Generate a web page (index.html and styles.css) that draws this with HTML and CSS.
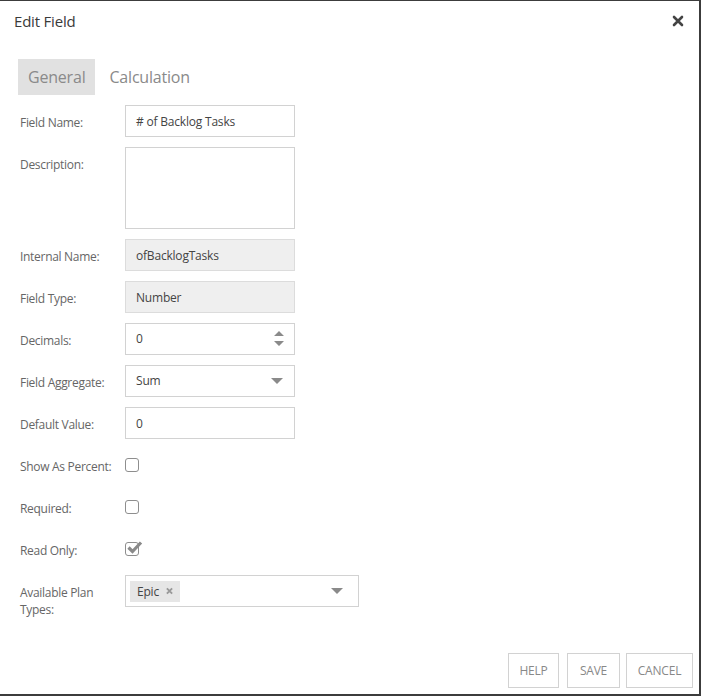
FILE: index.html
```html
<!DOCTYPE html>
<html>
<head>
<meta charset="utf-8">
<link rel="stylesheet" href="styles.css">
</head>
<body>
<div class="dialog">
  <div class="header">
    <div class="title">Edit Field</div>
    <button class="close" aria-label="Close">
      <svg width="12" height="12" viewBox="0 0 12 12"><path d="M2 2 L10 10 M10 2 L2 10" stroke="#444" stroke-width="2.6" stroke-linecap="round"/></svg>
    </button>
  </div>
  <div class="tabs">
    <div class="tab active">General</div>
    <div class="tab">Calculation</div>
  </div>
  <div class="form">
    <div class="row">
      <div class="label">Field Name:</div>
      <div class="input">#&nbsp;of Backlog Tasks</div>
    </div>
    <div class="row">
      <div class="label">Description:</div>
      <div class="input textarea"></div>
    </div>
    <div class="row">
      <div class="label">Internal Name:</div>
      <div class="input disabled">ofBacklogTasks</div>
    </div>
    <div class="row">
      <div class="label">Field Type:</div>
      <div class="input disabled">Number</div>
    </div>
    <div class="row">
      <div class="label">Decimals:</div>
      <div class="input with-icon">0
        <svg class="spin" width="12" height="18" viewBox="0 0 12 18"><path d="M1 6 L6 1 L11 6 Z M1 11 L11 11 L6 16 Z" fill="#8a8a8a"/></svg>
      </div>
    </div>
    <div class="row">
      <div class="label">Field Aggregate:</div>
      <div class="input with-icon">Sum
        <svg class="caret" width="12" height="6" viewBox="0 0 12 6"><path d="M0 0 L12 0 L6 6 Z" fill="#8a8a8a"/></svg>
      </div>
    </div>
    <div class="row">
      <div class="label">Default Value:</div>
      <div class="input">0</div>
    </div>
    <div class="row">
      <div class="label">Show As Percent:</div>
      <div class="check-cell"><span class="checkbox"></span></div>
    </div>
    <div class="row">
      <div class="label">Required:</div>
      <div class="check-cell"><span class="checkbox"></span></div>
    </div>
    <div class="row">
      <div class="label">Read Only:</div>
      <div class="check-cell"><span class="checkbox checked">
        <svg width="18" height="16" viewBox="0 0 18 16"><path d="M3.5 7.5 L7.5 11.5 L16 2.5" fill="none" stroke="#8a8a8a" stroke-width="3.2" stroke-linejoin="miter"/></svg>
      </span></div>
    </div>
    <div class="row">
      <div class="label">Available Plan Types:</div>
      <div class="input multi with-icon">
        <span class="tag">Epic <svg width="8" height="8" viewBox="0 0 8 8"><path d="M1 1 L7 7 M7 1 L1 7" stroke="#999" stroke-width="2.2"/></svg></span>
        <svg class="caret" width="12" height="6" viewBox="0 0 12 6"><path d="M0 0 L12 0 L6 6 Z" fill="#8a8a8a"/></svg>
      </div>
    </div>
  </div>
  <div class="footer">
    <button class="btn help">HELP</button>
    <button class="btn save">SAVE</button>
    <button class="btn cancel">CANCEL</button>
  </div>
</div>
</body>
</html>
```
FILE: styles.css
```css
* { box-sizing: border-box; }
html, body { margin: 0; padding: 0; background: #fff; }
body { font-family: "Open Sans", "Noto Sans", sans-serif; color: #444; }
.dialog {
  width: 701px;
  height: 696px;
  border-top: 1px solid #3c3c3c;
  border-right: 2px solid #3c3c3c;
  border-bottom: 2px solid #3c3c3c;
  display: flex;
  flex-direction: column;
  background: #fff;
}
.header {
  display: flex;
  align-items: center;
  justify-content: space-between;
  padding: 0 15px 0 14px;
  height: 40px;
}
.title { font-size: 15px; color: #3a3a3a; letter-spacing: -0.2px; }
.close { border: 0; background: none; padding: 0; width: 12px; height: 12px; display: flex; cursor: pointer; }
.tabs {
  display: flex;
  gap: 4px;
  margin: 18px 0 0 18px;
}
.tab {
  font-size: 16px;
  color: #8a8a8a;
  height: 36px;
  line-height: 36px;
  padding: 0 10px;
  letter-spacing: -0.2px;
}
.tab.active { background: #e1e1e1; }
.form {
  display: flex;
  flex-direction: column;
  gap: 10px;
  padding: 10px 0 0 20px;
}
.row { display: flex; align-items: flex-start; }
.label {
  width: 105px;
  padding: 9px 8px 0 0;
  font-size: 12px;
  line-height: 17px;
  color: #666;
  letter-spacing: -0.3px;
}
.input {
  width: 170px;
  height: 32px;
  border: 1px solid #d2d2d2;
  padding: 1px 10px 0;
  font-size: 12px;
  line-height: 30px;
  color: #444;
  letter-spacing: -0.2px;
  position: relative;
}
.input.textarea { height: 82px; }
.input.disabled { background: #efefef; border-color: #dcdcdc; }
.with-icon { display: flex; align-items: center; justify-content: space-between; padding-top: 0; }
.spin { margin-right: -1px; }
.caret { margin-right: 1px; }
.check-cell { height: 32px; display: flex; align-items: center; }
.checkbox {
  width: 14px;
  height: 14px;
  border: 1px solid #8e8e8e;
  border-radius: 3px;
  position: relative;
}
.checkbox svg { position: absolute; left: -1px; top: -3px; }
.input.multi { width: 234px; padding: 0 14px 0 4px; }
.tag {
  background: #e6e6e6;
  height: 21px;
  line-height: 21px;
  width: 50px;
  padding: 0 7px;
  display: inline-flex;
  align-items: center;
  gap: 7px;
  font-size: 12px;
  color: #444;
}
.footer {
  margin-top: auto;
  display: flex;
  justify-content: flex-end;
  padding: 0 6px 6px 0;
}
.btn {
  font-family: inherit;
  height: 35px;
  background: #fff;
  border: 1px solid #d2d2d2;
  color: #888;
  font-size: 12px;
  padding: 0;
  letter-spacing: -0.2px;
}
.btn.help { width: 51px; }
.btn.save { width: 53px; margin-left: 8px; }
.btn.cancel { width: 67px; margin-left: 6px; }
```
